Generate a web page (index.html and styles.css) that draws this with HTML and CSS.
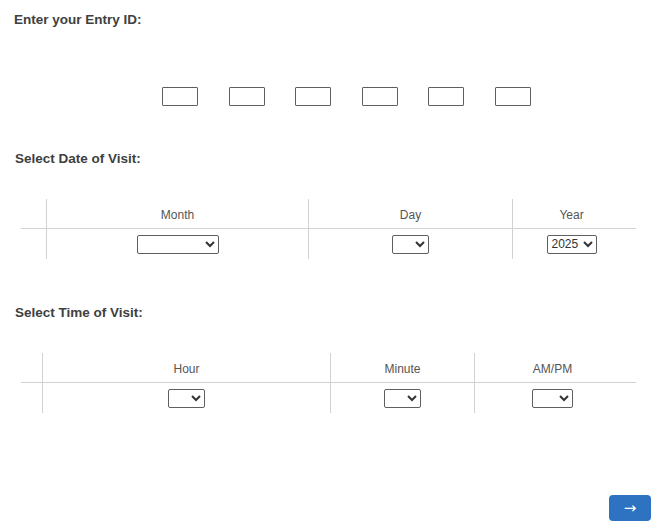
FILE: index.html
```html
<!DOCTYPE html>
<html>
<head>
<meta charset="utf-8">
<link rel="stylesheet" href="styles.css">
</head>
<body>
<div class="page">
  <h2 class="label first">Enter your Entry ID:</h2>
  <div class="id-row">
    <input class="id-box" type="text">
    <input class="id-box" type="text">
    <input class="id-box" type="text">
    <input class="id-box" type="text">
    <input class="id-box" type="text">
    <input class="id-box" type="text">
  </div>

  <h2 class="label second">Select Date of Visit:</h2>
  <div class="grid date-grid">
    <div class="cell head lead"></div>
    <div class="cell head">Month</div>
    <div class="cell head">Day</div>
    <div class="cell head last">Year</div>
    <div class="cell lead"></div>
    <div class="cell"><select class="sel w-month"><option></option></select></div>
    <div class="cell"><select class="sel w-small"><option></option></select></div>
    <div class="cell last"><select class="sel w-year"><option>2025</option></select></div>
  </div>

  <h2 class="label third">Select Time of Visit:</h2>
  <div class="grid time-grid">
    <div class="cell head lead"></div>
    <div class="cell head">Hour</div>
    <div class="cell head">Minute</div>
    <div class="cell head last">AM/PM</div>
    <div class="cell lead"></div>
    <div class="cell"><select class="sel w-small"><option></option></select></div>
    <div class="cell"><select class="sel w-small"><option></option></select></div>
    <div class="cell last"><select class="sel w-ampm"><option></option></select></div>
  </div>

  <div class="actions">
    <button class="next" type="button">→</button>
  </div>
</div>
</body>
</html>
```

FILE: styles.css
```css
html, body {
  margin: 0;
  padding: 0;
  background: #ffffff;
}

.page {
  width: 660px;
  font-family: "Liberation Sans", Arial, sans-serif;
  color: #333333;
}

.label {
  margin: 0;
  font-size: 13.5px;
  line-height: 16px;
  font-weight: bold;
  color: #404040;
}

.label.first {
  padding: 12px 0 0 14px;
}

.label.second {
  margin-top: 45px;
  padding-left: 15px;
}

.label.third {
  margin-top: 46px;
  padding-left: 15px;
}

.id-row {
  margin-top: 59px;
  padding-left: 162px;
  display: flex;
  gap: 30.6px;
}

.id-box {
  box-sizing: border-box;
  width: 36px;
  height: 19px;
  margin: 0;
  padding: 0 2px;
  border: 1px solid #5f5f5f;
  border-radius: 1px;
  background: #fff;
}

.grid {
  display: grid;
  margin-top: 32px;
  margin-left: 21px;
  width: 615px;
  grid-template-rows: 30px 30px;
}

.date-grid {
  grid-template-columns: 25px 262px 204px 124px;
}

.time-grid {
  grid-template-columns: 21px 288px 144px 162px;
}

.cell {
  display: flex;
  align-items: center;
  justify-content: center;
  border-left: 1px solid #d2d2d2;
  box-sizing: border-box;
}

.cell.lead {
  border-left: none;
}

.cell.last {
  padding-right: 6px;
}

.cell.head {
  border-bottom: 1px solid #d2d2d2;
  font-size: 12px;
  color: #555555;
  padding-top: 2px;
}

.cell.head.last {
  padding-right: 6px;
}

.sel {
  box-sizing: border-box;
  height: 19px;
  margin: 0;
  font-family: "Liberation Sans", Arial, sans-serif;
  font-size: 13.33px;
  color: #333;
  border: 1px solid #5f5f5f;
  border-radius: 2px;
  background: #fff;
}

.w-month { width: 82px; }
.w-small { width: 37px; }
.w-year { width: 50px; font-size: 12px; }
.w-ampm { width: 41px; }

.actions {
  margin-top: 82px;
  display: flex;
  justify-content: flex-end;
  padding-right: 9px;
}

.next {
  width: 42px;
  height: 26px;
  border: none;
  border-radius: 4px;
  background: #2d73c2;
  color: #ffffff;
  font-family: "DejaVu Sans", sans-serif;
  font-size: 15px;
  line-height: 26px;
  padding: 0;
}
```
